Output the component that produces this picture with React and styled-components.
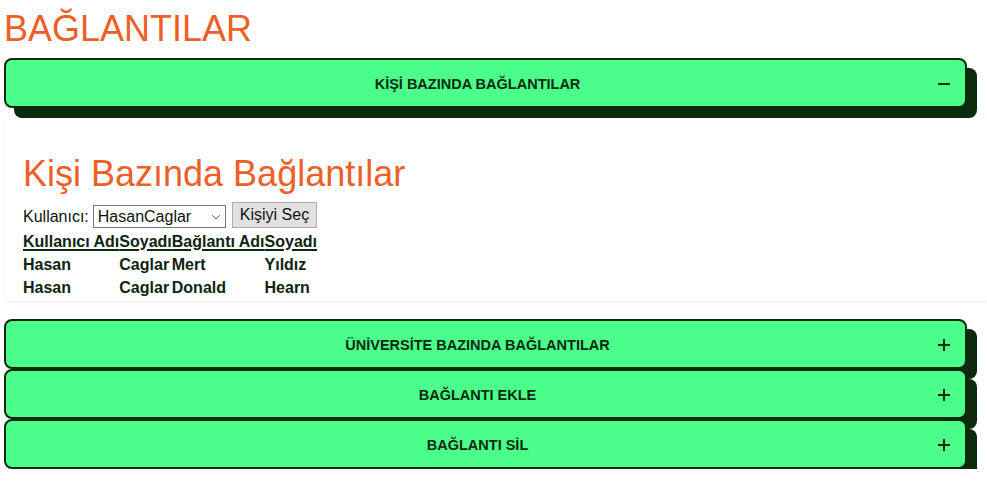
import styled, { createGlobalStyle } from "styled-components"

const GlobalStyle = createGlobalStyle`
    html, body {
        margin: 0;
        padding: 0;
        background: #ffffff;
    }
    body {
        font-family: "Liberation Sans", Arial, sans-serif;
        overflow: hidden;
    }
`

const dark = "#0b2a0e"
const green = "#4cff8a"
const orange = "#ec5f28"

function Icon({ open }) {
    return (
        <IconBox width="12" height="12" viewBox="0 0 12 12">
            <rect x="0" y="5" width="12" height="2" fill={dark} />
            {!open && <rect x="5" y="0" width="2" height="12" fill={dark} />}
        </IconBox>
    )
}

function Header({ title, open }) {
    return (
        <Toggle>
            <ToggleText>{title}</ToggleText>
            <Icon open={open} />
        </Toggle>
    )
}

const rows = [
    { name: "Hasan", surname: "Caglar", cname: "Mert", csurname: "Yıldız" },
    { name: "Hasan", surname: "Caglar", cname: "Donald", csurname: "Hearn" },
]

function App() {
    return (
        <>
            <GlobalStyle />
            <Page>
                <Title>BAĞLANTILAR</Title>
                <Header title="KİŞİ BAZINDA BAĞLANTILAR" open />
                <Panel>
                    <SubTitle>Kişi Bazında Bağlantılar</SubTitle>
                    <Controls>
                        <Label>Kullanıcı:</Label>
                        <SelectWrap>
                            <Select defaultValue="HasanCaglar">
                                <option>HasanCaglar</option>
                            </Select>
                            <Chevron width="10" height="6" viewBox="0 0 10 6">
                                <path d="M1 1l4 4 4-4" fill="none" stroke="#6d6d6d" strokeWidth="1" />
                            </Chevron>
                        </SelectWrap>
                        <Button>Kişiyi Seç</Button>
                    </Controls>
                    <Table>
                        <thead>
                            <tr>
                                <Th>Kullanıcı Adı</Th>
                                <Th>Soyadı</Th>
                                <Th>Bağlantı Adı</Th>
                                <Th>Soyadı</Th>
                            </tr>
                        </thead>
                        <tbody>
                            {rows.map((r, i) => (
                                <tr key={i}>
                                    <Td>{r.name}</Td>
                                    <Td>{r.surname}</Td>
                                    <Td>{r.cname}</Td>
                                    <Td>{r.csurname}</Td>
                                </tr>
                            ))}
                        </tbody>
                    </Table>
                </Panel>
                <Stack>
                    <Header title="ÜNİVERSİTE BAZINDA BAĞLANTILAR" />
                    <Header title="BAĞLANTI EKLE" />
                    <Header title="BAĞLANTI SİL" />
                </Stack>
            </Page>
        </>
    )
}

const Page = styled.div`
    padding: 8px 0 0 4px;
`

const Title = styled.h1`
    margin: 0 0 9px 0;
    font-size: 36px;
    font-weight: normal;
    color: ${orange};
    line-height: 41px;
`

const Toggle = styled.div`
    box-sizing: border-box;
    display: flex;
    align-items: center;
    height: 50px;
    margin-right: 20px;
    padding: 2px 15px 0 16px;
    background: ${green};
    border: 2px solid ${dark};
    border-radius: 8px;
    box-shadow: 10px 10px 0 ${dark};
    cursor: pointer;
`

const ToggleText = styled.div`
    flex: 1;
    text-align: center;
    font-size: 14.5px;
    font-weight: bold;
    color: ${dark};
    padding-right: 5px;
`

const IconBox = styled.svg`
    display: block;
    flex: none;
`

const Panel = styled.div`
    margin-top: 10px;
    padding: 35px 19px 1px 19px;
    border-radius: 4px;
    box-shadow: 0 1px 3px rgba(0, 0, 0, 0.08);
`

const SubTitle = styled.h2`
    margin: 0 0 8px 0;
    font-size: 36px;
    font-weight: normal;
    line-height: 41px;
    color: ${orange};
`

const Controls = styled.div`
    display: flex;
    align-items: flex-end;
    height: 26px;
    font-size: 16px;
    color: #111;
`

const Label = styled.span`
    margin-right: 4px;
    line-height: 22px;
`

const SelectWrap = styled.span`
    position: relative;
    display: block;
    margin-right: 6px;
`

const Select = styled.select`
    display: block;
    box-sizing: border-box;
    width: 133px;
    height: 23px;
    padding: 0 18px 0 4px;
    font-family: "Liberation Sans", Arial, sans-serif;
    font-size: 16px;
    color: #111;
    background: #fff;
    border: 1px solid #767676;
    border-radius: 0;
    appearance: none;
    -webkit-appearance: none;
`

const Chevron = styled.svg`
    position: absolute;
    right: 5px;
    top: 9px;
    pointer-events: none;
`

const Button = styled.button`
    box-sizing: border-box;
    height: 26px;
    padding: 0 7px;
    font-family: "Liberation Sans", Arial, sans-serif;
    font-size: 16px;
    color: #111;
    background: #e1e1e1;
    border: 1px solid #adadad;
    border-radius: 0;
`

const Table = styled.table`
    margin-top: 2px;
    border-spacing: 0;
    font-size: 16px;
    font-weight: bold;
    color: #0c2410;
`

const Th = styled.th`
    padding: 2.5px 0;
    text-align: left;
    line-height: 18.4px;
    text-decoration: underline;
    text-decoration-thickness: 2px;
    text-underline-offset: 2px;
    text-decoration-color: ${dark};
`

const Td = styled.td`
    padding: 2.5px 0;
    line-height: 18.4px;
`

const Stack = styled.div`
    margin-top: 18px;
`

export default App
